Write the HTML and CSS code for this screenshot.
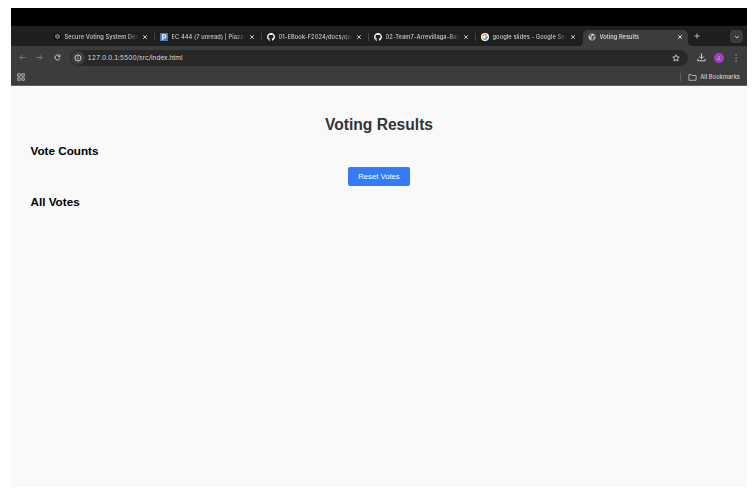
FILE: index.html
```html
<!DOCTYPE html>
<html lang="en">
<head>
<meta charset="utf-8">
<title>Voting Results</title>
<link rel="stylesheet" href="styles.css">
</head>
<body>
<svg class="defs" aria-hidden="true">
  <symbol id="x" viewBox="0 0 6 6"><path d="M1.2 1.2l3.6 3.6M4.8 1.2L1.2 4.8" stroke="currentColor" stroke-width=".95"/></symbol>
  <symbol id="github" viewBox="0 0 16 16"><path fill="#fff" d="M8 0C3.58 0 0 3.58 0 8c0 3.54 2.29 6.53 5.47 7.59.4.07.55-.17.55-.38 0-.19-.01-.82-.01-1.49-2.01.37-2.53-.49-2.69-.94-.09-.23-.48-.94-.82-1.13-.28-.15-.68-.52-.01-.53.63-.01 1.08.58 1.23.82.72 1.21 1.87.87 2.33.66.07-.52.28-.87.51-1.07-1.78-.2-3.64-.89-3.64-3.95 0-.87.31-1.59.82-2.15-.08-.2-.36-1.02.08-2.12 0 0 .67-.21 2.2.82a7.6 7.6 0 0 1 4 0c1.53-1.04 2.2-.82 2.2-.82.44 1.1.16 1.92.08 2.12.51.56.82 1.27.82 2.15 0 3.07-1.87 3.75-3.65 3.95.29.25.54.73.54 1.48 0 1.07-.01 1.93-.01 2.2 0 .21.15.46.55.38A8 8 0 0 0 16 8c0-4.42-3.58-8-8-8z"/></symbol>
</svg>
<div class="screen">
  <div class="notch"></div>
  <div class="tabs">
    <div class="tab">
      <svg class="fav small" viewBox="0 0 16 16"><circle cx="8" cy="8" r="8" fill="#050505"/><g fill="none" stroke="#b5b5b5" stroke-width="1.4"><path d="M8 2.800l4.500 2.600v5.200L8 13.200l-4.500-2.600V5.400z"/><path d="M8 5.300l2.400 1.400v2.700L8 10.800 5.600 9.400V6.700zM8 2.800v2.500M12.500 5.400l-2.100 1.300M12.500 10.600l-2.100-1.200M8 13.200v-2.400M3.500 10.600l2.100-1.200M3.500 5.400l2.100 1.300"/></g></svg>
      <span class="label">Secure Voting System Des</span><svg class="close"><use href="#x"/></svg>
    </div>
    <div class="tab">
      <svg class="fav" viewBox="0 0 16 16"><path fill="#477cb3" d="M0 0h16v16H0z"/><path d="M5.500 14.500V3.500h3.200a3.200 3.200 0 0 1 0 6.400H7" fill="none" stroke="#fff" stroke-width="2.300"/></svg>
      <span class="label">EC 444 (7 unread) | Piazza</span><svg class="close"><use href="#x"/></svg>
    </div>
    <div class="tab">
      <svg class="fav"><use href="#github"/></svg>
      <span class="label">01-EBook-F2024/docs/que</span><svg class="close"><use href="#x"/></svg>
    </div>
    <div class="tab">
      <svg class="fav"><use href="#github"/></svg>
      <span class="label">02-Team7-Arrevillaga-Bas</span><svg class="close"><use href="#x"/></svg>
    </div>
    <div class="tab last">
      <svg class="fav" viewBox="0 0 16 16"><circle cx="8" cy="8" r="8" fill="#fff"/><g fill="none" stroke-width="2.200"><path stroke="#ea4335" d="M11.400 4.800A4.700 4.700 0 0 0 3.900 5.700"/><path stroke="#fbbc05" d="M3.900 5.700a4.700 4.700 0 0 0 0 4.600"/><path stroke="#34a853" d="M3.900 10.300a4.700 4.700 0 0 0 7.200 1.200"/><path stroke="#4285f4" d="M11.100 11.500A4.600 4.600 0 0 0 12.700 8.200H8"/></g></svg>
      <span class="label">google slides - Google Sea</span><svg class="close"><use href="#x"/></svg>
    </div>
    <div class="tab active">
      <svg class="fav" viewBox="0 0 16 16"><circle cx="8" cy="8" r="6.500" fill="none" stroke="#c4c7ca" stroke-width="1.400"/><path fill="#c4c7ca" d="M1.500 6l4 1.500 2 2-.5 4.500-3.500-1.500L1.500 9zM8 1.500l4.500 1.700L11 6 9 5.500 7.500 8 5 6.500zM10 8.500l4.500-.5-1 3-2.500 2z"/></svg>
      <span class="label">Voting Results</span><svg class="close"><use href="#x"/></svg>
    </div>
    <svg class="plus" viewBox="0 0 6 6"><path d="M3 .4v5.200M.4 3h5.200" stroke="#c8c9c9" stroke-width=".85"/></svg>
    <div class="tabsearch"><svg viewBox="0 0 6 4"><path d="M1.100 1L3 2.900 4.900 1" fill="none" stroke="#d8d8d8" stroke-width=".9"/></svg></div>
  </div>
  <div class="toolbar">
    <svg class="nav dim" viewBox="0 0 7 7"><path d="M6.500 3.500H.8M3.300 1L.8 3.500 3.300 6"/></svg>
    <svg class="nav dim" viewBox="0 0 7 7"><path d="M.5 3.500h5.700M3.700 1l2.500 2.500L3.700 6"/></svg>
    <svg class="nav" viewBox="0 0 7 7"><path d="M5.900 4.200A2.500 2.500 0 1 1 5.500 2M6 .6v2.100H3.900"/></svg>
    <div class="address">
      <svg class="info" viewBox="0 0 16 16"><circle cx="8" cy="8" r="8" fill="#3c3c3c"/><circle cx="8" cy="8" r="3.500" fill="none" stroke="#e0e0e0" stroke-width="1"/><path d="M8 7.500v2.200M8 5.900v.9" stroke="#e0e0e0" stroke-width="1"/></svg>
      <span class="url">127.0.0.1:5500/src/index.html</span>
      <svg class="star" viewBox="0 0 8 8"><path d="M4 .8l.95 2.100 2.300.25-1.700 1.550.45 2.300L4 5.850 2 7l.45-2.300L.75 3.150l2.300-.25z" fill="none" stroke="#d5d5d5" stroke-width=".9"/></svg>
    </div>
    <svg class="download" viewBox="0 0 9 9"><path d="M4.500.5v5M2.300 3.500l2.200 2.200 2.200-2.200M.9 5.800v2h7.200v-2" fill="none" stroke="#d2d2d2" stroke-width="1"/></svg>
    <div class="avatar">J</div>
    <svg class="dots" viewBox="0 0 2 8"><path fill="#d2d2d2" d="M.5.500h1.100v1.100H.5zM.5 3.500h1.100v1.100H.5zM.5 6.500h1.100v1.100H.5z"/></svg>
  </div>
  <div class="bookmarks">
    <svg class="apps" viewBox="0 0 8 8"><path d="M.7.700h2.500v2.500H.7zM4.800.700h2.500v2.500H4.800zM.7 4.800h2.500v2.500H.7zM4.800 4.800h2.500v2.500H4.800z" fill="none" stroke="#c0c0c0" stroke-width=".85"/></svg>
    <i class="divider"></i>
    <svg class="folder" viewBox="0 0 9 7"><path d="M.9.600h2.500l.9.900h3.800v4.800H.9z" fill="none" stroke="#c9c9c9" stroke-width=".8" stroke-linejoin="round"/></svg>
    <span class="all">All Bookmarks</span>
  </div>
  <main class="page">
    <h1>Voting Results</h1>
    <h2>Vote Counts</h2>
    <button class="reset">Reset Votes</button>
    <h2>All Votes</h2>
  </main>
</div>
</body>
</html>
```
FILE: styles.css
```css
* { box-sizing: border-box; }
body { margin: 0; padding: 8px 7px 11px 11px; background: #fff; font-family: Inter, "Liberation Sans", sans-serif; }
svg { display: block; flex: none; }
.defs { display: none; }
.screen { width: 736px; height: 479px; display: flex; flex-direction: column; background: #f9f9f9; overflow: hidden; }
.notch { height: 18px; background: #000; flex: none; }
.tabs { height: 20px; flex: none; display: flex; align-items: flex-end; padding-left: 36.5px; background: #1e201f; }
.tab { position: relative; width: 107px; height: 16px; padding: 0 0 3px 5px; display: flex; align-items: center; flex: none; color: #cbcccc; }
.tab:not(.active):not(.last)::after { content: ""; position: absolute; right: 0; top: 3px; width: 1px; height: 8px; background: #414342; }
.fav { width: 8px; height: 8px; margin-right: 4px; }
.small { width: 7px; height: 7px; margin: 0 4px 0 1px; }
.label { width: 75px; font-size: 5.7px; font-weight: 500; line-height: 8px; letter-spacing: .1px; white-space: nowrap; mask-image: linear-gradient(to right, #000 84%, transparent 98%); }
.close { width: 6px; height: 6px; margin-left: 2.5px; }
.active { width: 104.5px; padding-left: 4.5px; background: #3c3c3c; border-radius: 5px 5px 0 0; color: #e1e1e1; margin-left: .5px; }
.active .label { width: 74.5px; letter-spacing: .06px; }
.active::before, .active::after { content: ""; position: absolute; bottom: 0; width: 4px; height: 4px; }
.active::before { left: -4px; background: radial-gradient(circle at 0 0, transparent 3.7px, #3c3c3c 4px); }
.active::after { right: -4px; background: radial-gradient(circle at 100% 0, transparent 3.7px, #3c3c3c 4px); }
.plus { width: 6px; height: 6px; margin: 0 0 7px 6px; }
.tabsearch { width: 13px; height: 13px; margin: 0 4px 3px auto; border-radius: 4px; background: #3c3c3c; display: flex; align-items: center; justify-content: center; }
.tabsearch svg { width: 6px; height: 4px; }
.toolbar { height: 23px; flex: none; display: flex; align-items: center; padding: 0 10px 0 7.5px; background: #3c3c3c; }
.nav { width: 7px; height: 7px; margin-right: 10.5px; fill: none; stroke: #d0d0d0; stroke-width: .95; }
.dim { stroke: #818181; stroke-width: .85; }
.address { width: 618px; height: 16px; border-radius: 8px; background: #282828; display: flex; align-items: center; padding: 0 8px 0 1px; margin-left: -1px; }
.info { width: 14px; height: 14px; }
.url { margin-left: 2.5px; font-size: 6.5px; line-height: 10px; color: #dedede; letter-spacing: .01px; font-feature-settings: "tnum"; }
.star { width: 8px; height: 8px; margin-left: auto; }
.download { width: 9px; height: 9px; margin-left: 8.5px; }
.avatar { width: 10px; height: 10px; border-radius: 50%; margin-left: 8px; background: #a142bd; color: #f2dff6; font-size: 5px; line-height: 10px; text-align: center; }
.dots { width: 2px; height: 8px; margin-left: auto; }
.bookmarks { height: 17px; flex: none; display: flex; align-items: center; padding: 0 7px 0 6px; background: #3c3c3c; border-bottom: 1px solid #606060; }
.apps { width: 8px; height: 8px; }
.divider { width: 1px; height: 8px; background: #5c5c5c; margin-left: auto; }
.folder { width: 9px; height: 7px; margin: 0 3px 0 7px; }
.all { font-size: 5.7px; line-height: 8px; font-weight: 500; letter-spacing: .06px; color: #d2d2d2; }
.page { flex: 1; padding: 30px 19.5px 0; display: flex; flex-direction: column; font-family: "Liberation Sans", Arial, sans-serif; }
h1 { margin: 0 0 1px; text-align: center; font-size: 15.6px; line-height: 18px; color: #333; }
h2 { margin: 9px 0 0; font-size: 11.7px; line-height: 14px; color: #000; }
.reset { align-self: center; width: 62px; height: 19px; margin: 9px 0 0; padding: 0; border: 0; border-radius: 2px; background: #357bf8; color: #fff; font: 7.7px/19px "Liberation Sans", Arial, sans-serif; }
```
